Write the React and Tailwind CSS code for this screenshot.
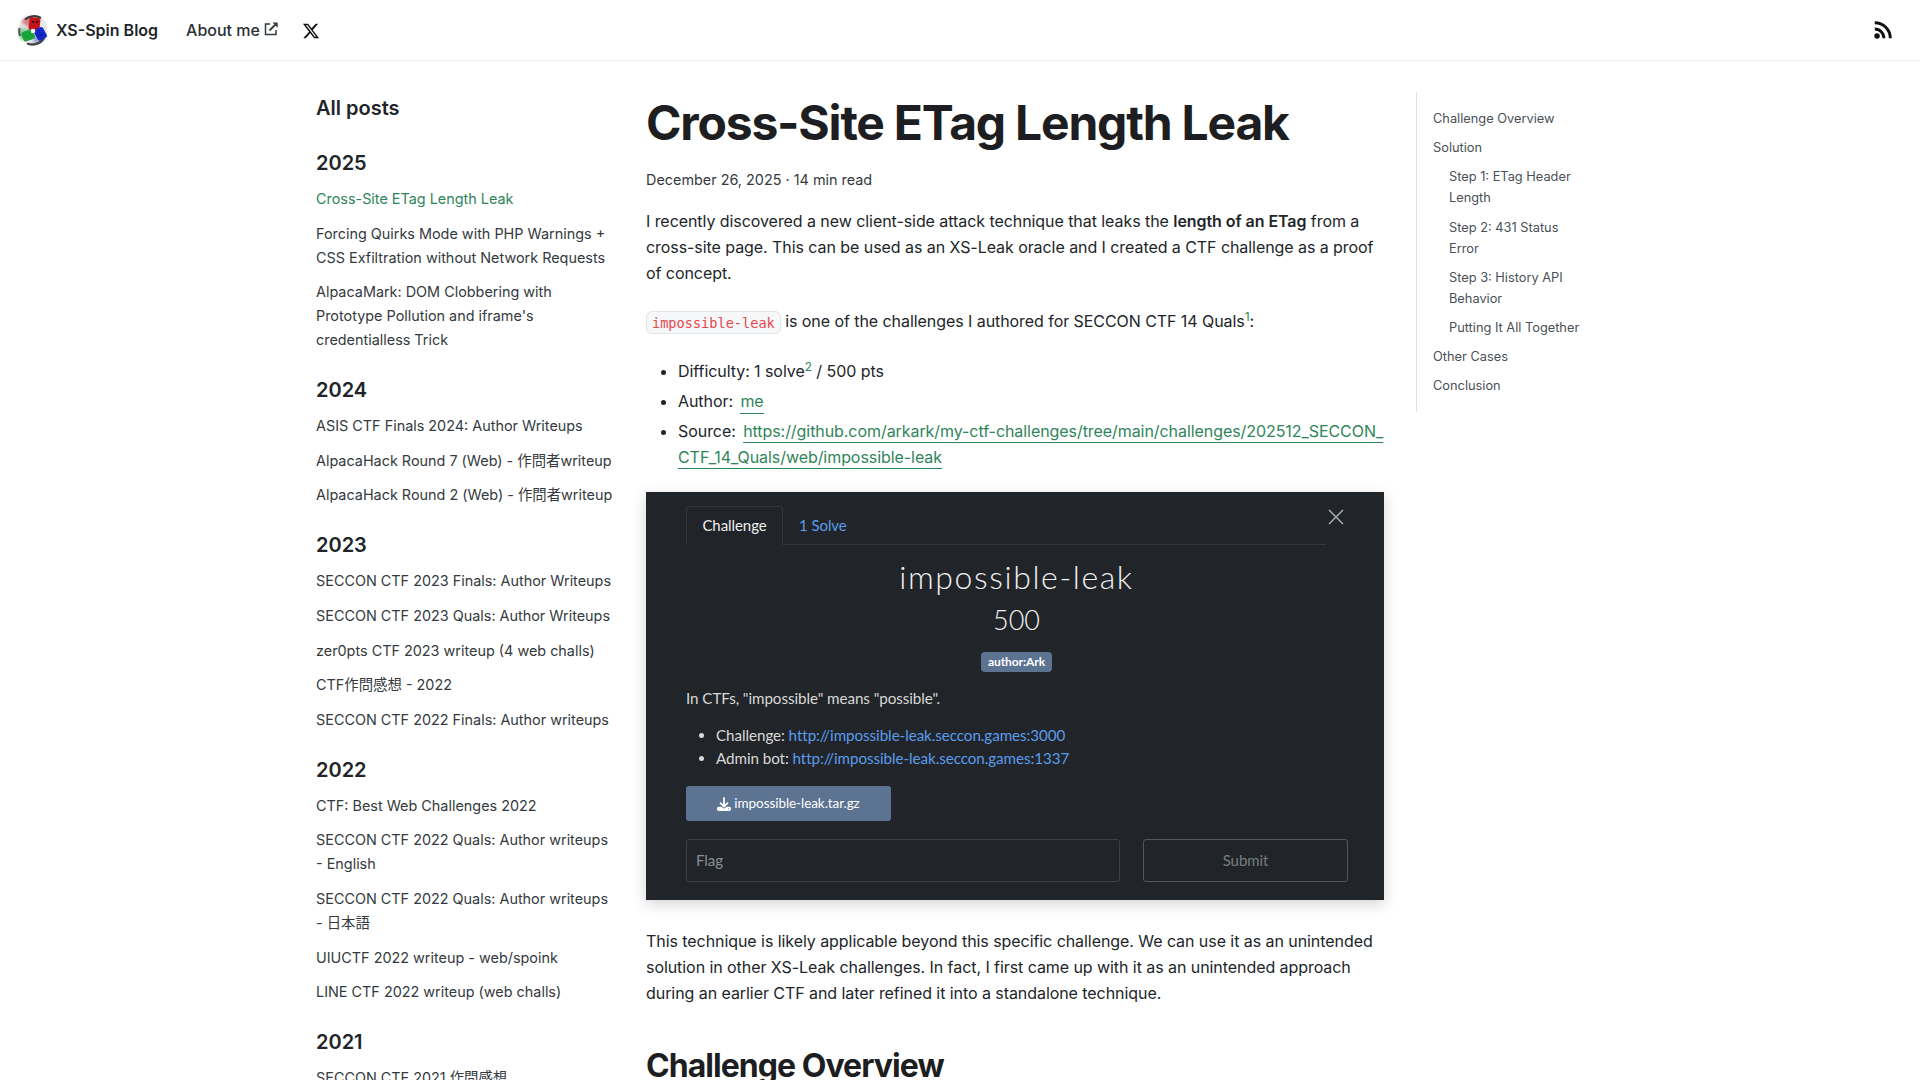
import React from 'react'
import { FaXTwitter, FaDownload } from 'react-icons/fa6'

const years = [
  { year: '2025', posts: ['Cross-Site ETag Length Leak', 'Forcing Quirks Mode with PHP Warnings + CSS Exfiltration without Network Requests', "AlpacaMark: DOM Clobbering with Prototype Pollution and iframe's credentialless Trick"] },
  { year: '2024', posts: ['ASIS CTF Finals 2024: Author Writeups', 'AlpacaHack Round 7 (Web) - 作問者writeup', 'AlpacaHack Round 2 (Web) - 作問者writeup'] },
  { year: '2023', posts: ['SECCON CTF 2023 Finals: Author Writeups', 'SECCON CTF 2023 Quals: Author Writeups', 'zer0pts CTF 2023 writeup (4 web challs)', 'CTF作問感想 - 2022', 'SECCON CTF 2022 Finals: Author writeups'] },
  { year: '2022', posts: ['CTF: Best Web Challenges 2022', 'SECCON CTF 2022 Quals: Author writeups - English', 'SECCON CTF 2022 Quals: Author writeups - 日本語', 'UIUCTF 2022 writeup - web/spoink', 'LINE CTF 2022 writeup (web challs)'] },
  { year: '2021', posts: ['SECCON CTF 2021 作問感想'] },
]

const toc = [
  { label: 'Challenge Overview' },
  { label: 'Solution' },
  { label: 'Step 1: ETag Header Length', sub: true },
  { label: 'Step 2: 431 Status Error', sub: true },
  { label: 'Step 3: History API Behavior', sub: true },
  { label: 'Putting It All Together', sub: true },
  { label: 'Other Cases' },
  { label: 'Conclusion' },
]

const sans = "font-['Inter','Noto_Sans_CJK_JP',sans-serif]"

const Logo = () => (
  <svg width="32" height="32" viewBox="0 0 32 32">
    <defs>
      <filter id="spin" x="-20%" y="-20%" width="140%" height="140%"><feGaussianBlur stdDeviation="1.6" /></filter>
      <filter id="edge" x="-20%" y="-20%" width="140%" height="140%"><feGaussianBlur stdDeviation="0.6" /></filter>
    </defs>
    <circle cx="16" cy="16" r="14.5" fill="#d6d6d6" opacity="0.55" filter="url(#edge)" />
    <path d="M16 16L4 8A14 14 0 0 1 16 2Z" fill="#c22a30" opacity="0.55" filter="url(#spin)" />
    <path d="M16 16L5 27A14 14 0 0 1 2 14Z" fill="#18a038" opacity="0.45" filter="url(#spin)" />
    <path d="M16 16L29 20A14 14 0 0 1 17 30Z" fill="#1c30c0" opacity="0.4" filter="url(#spin)" />
    <path d="M8 5.5A14 14 0 0 1 24 4" fill="none" stroke="#3a3a3a" strokeWidth="2.2" filter="url(#edge)" />
    <path d="M3 22A14 14 0 0 1 2.5 14" fill="none" stroke="#555" strokeWidth="2" filter="url(#edge)" />
    <path d="M10 29.5A14 14 0 0 0 27 24" fill="none" stroke="#444" strokeWidth="2.4" filter="url(#edge)" />
    <rect x="12" y="3.5" width="11" height="13" rx="2.5" fill="#c2121a" transform="rotate(6 17 10)" />
    <rect x="5" y="16.5" width="12" height="10" rx="2.5" fill="#18a436" transform="rotate(-20 11 21)" />
    <rect x="18.5" y="14" width="10" height="12" rx="2.5" fill="#1428c8" transform="rotate(-28 23 20)" />
    <circle cx="16" cy="17" r="2.3" fill="#f6f6f6" />
    <circle cx="16" cy="8" r="1.1" fill="#111" />
    <circle cx="20" cy="8" r="1.1" fill="#111" />
    <circle cx="9.5" cy="22.5" r="1.1" fill="#0a3" />
    <circle cx="24" cy="21" r="1.1" fill="#0a1a80" />
  </svg>
)

const RssIcon = () => (
  <svg width="22" height="22" viewBox="0 0 24 24" fill="none" stroke="#111" strokeWidth="3.2">
    <circle cx="5.5" cy="18.5" r="3" fill="#111" stroke="none" />
    <path d="M3 11a10 10 0 0 1 10 10" />
    <path d="M3 4a17 17 0 0 1 17 17" />
  </svg>
)

const ExternalIcon = () => (
  <svg width="15" height="15" viewBox="0 0 15 15" fill="none" stroke="#343a40" strokeWidth="1.5" className="mb-[3px]">
    <path d="M6 3H1.5v10.5H12V9" />
    <path d="M5.5 9.5L12.5 2.5" strokeWidth="1.8" />
    <path d="M8.5 1.5h5.2v5.2z" fill="#343a40" stroke="none" />
  </svg>
)

const Nav = () => (
  <header className="h-[61px] border-b border-[#e9ecef] flex items-center justify-between pl-[17px] pr-[26px] shrink-0">
    <div className="flex items-center">
      <Logo />
      <span className="ml-[7px] text-[16px] font-semibold text-[#212529]">XS-Spin Blog</span>
      <span className="ml-[28px] text-[16px] font-[450] text-[#2b3035] flex items-center gap-[4px]">
        About me <ExternalIcon />
      </span>
      <FaXTwitter className="ml-[23px] mt-[2px] w-[18px] h-[18px] text-[#111]" />
    </div>
    <RssIcon />
  </header>
)

const Sidebar = () => (
  <aside className="w-[330px] shrink-0 pr-[30px] pt-[33px]">
    <h2 className="text-[20px] leading-[28px] font-semibold text-[#212529] mb-[26px]">All posts</h2>
    <div className="flex flex-col gap-[23px]">
      {years.map((y) => (
        <section key={y.year}>
          <h3 className="text-[20px] leading-[30px] font-semibold text-[#212529]">{y.year}</h3>
          <ul className="mt-[9px] flex flex-col gap-[10.6px]">
            {y.posts.map((p, i) => (
              <li key={p} className={`text-[14.4px] leading-[24px] ${y.year === '2025' && i === 0 ? 'text-[#2f855a]' : 'text-[#343a40]'}`}>{p}</li>
            ))}
          </ul>
        </section>
      ))}
    </div>
  </aside>
)

const ChallengeImage = () => (
  <div className="mt-[22px] w-[738px] h-[408px] bg-[#212529] shadow-[0_4px_14px_rgba(0,0,0,0.18)] relative pl-[40px] pr-[37px] pt-[14px] font-['Lato',sans-serif] text-[#e0e0e0]">
    <span className="absolute right-[38px] top-[15px] text-[#adb5bd]">
      <svg width="20" height="20" viewBox="0 0 20 20" stroke="currentColor" strokeWidth="1.4"><path d="M3 3l14 14M17 3L3 17" /></svg>
    </span>
    <div className="flex w-[640px] border-b border-[#32383e] h-[39px]">
      <div className="w-[97px] h-[39px] border border-b-[#212529] border-[#32383e] rounded-t-[4px] flex items-center justify-center text-[15px] text-[#eeeeee]">Challenge</div>
      <div className="px-[16px] flex items-center text-[15px] text-[#5b9bec]">1 Solve</div>
    </div>
    <h3 className="mt-[14px] text-center text-[32px] leading-[36px] font-light tracking-[0.05em] text-[#f0f0f0]">impossible-leak</h3>
    <p className="mt-[7px] text-center text-[27px] leading-[36px] font-light text-[#f0f0f0]">500</p>
    <div className="mt-[14px] flex justify-center">
      <span className="bg-[#5c7391] text-white text-[12px] font-bold leading-[20px] px-[7px] rounded-[4px]">author:Ark</span>
    </div>
    <p className="mt-[15px] text-[15.2px] leading-[22px] text-[#d8d8d8]">In CTFs, "impossible" means "possible".</p>
    <ul className="mt-[15px] list-disc pl-[30px] text-[15.2px] leading-[23px] text-[#d8d8d8]">
      <li>Challenge: <span className="text-[#5b9bec]">http://impossible-leak.seccon.games:3000</span></li>
      <li>Admin bot: <span className="text-[#5b9bec]">http://impossible-leak.seccon.games:1337</span></li>
    </ul>
    <div className="mt-[16px] w-[205px] h-[35px] bg-[#5c7391] rounded-[3px] flex items-center justify-center gap-[3px] text-[13.5px] text-white">
      <FaDownload className="w-[14px] h-[14px]" /> impossible-leak.tar.gz
    </div>
    <div className="mt-[18px] w-[662px] flex gap-[23px]">
      <div className="w-[434px] h-[43px] border border-[#3c4248] rounded-[3px] flex items-center px-[9px] text-[15px] text-[#8a8f94]">Flag</div>
      <div className="w-[205px] h-[43px] border border-[#50565c] rounded-[3px] flex items-center justify-center text-[15px] text-[#777c81]">Submit</div>
    </div>
  </div>
)

const Article = () => (
  <main className="w-[738px] shrink-0 pt-[32px] text-[#212529] tracking-[-0.004em]">
    <h1 className="text-[48px] leading-[60px] font-bold tracking-[-0.025em] text-[#1c1e21]">Cross-Site ETag Length Leak</h1>
    <p className="mt-[14px] text-[14.4px] leading-[26px] text-[#343a40] tracking-normal">December 26, 2025 · 14 min read</p>
    <p className="mt-[15px] text-[16px] leading-[26px]">
      I recently discovered a new client-side attack technique that leaks the <strong className="font-semibold">length of an ETag</strong> from a cross-site page. This can be used as an XS-Leak oracle and I created a CTF challenge as a proof of concept.
    </p>
    <p className="mt-[22px] text-[16px] leading-[26px]">
      <code className="font-['DejaVu_Sans_Mono',monospace] tracking-normal text-[13.6px] text-[#e5484d] bg-[#f6f7f8] border border-[#e2e5e8] rounded-[6px] px-[5px] py-[2.5px]">impossible-leak</code> is one of the challenges I authored for SECCON CTF 14 Quals<sup className="text-[#2f855a] text-[12px]">1</sup>:
    </p>
    <ul className="mt-[23px] list-disc pl-[32px] text-[16px] leading-[26px] flex flex-col gap-[4px]">
      <li>Difficulty: 1 solve<sup className="text-[#2f855a] text-[12px]">2</sup> / 500 pts</li>
      <li>Author: <span className="ml-[3px] text-[#2f855a] border-b border-[#2f855a] pb-[2px]">me</span></li>
      <li>Source: <span className="ml-[3px] text-[#2f855a] underline underline-offset-[5px] break-all">https://github.com/arkark/my-ctf-challenges/tree/main/challenges/202512_SECCON_CTF_14_Quals/web/impossible-leak</span></li>
    </ul>
    <ChallengeImage />
    <p className="mt-[28px] text-[16px] leading-[26px]">
      This technique is likely applicable beyond this specific challenge. We can use it as an unintended solution in other XS-Leak challenges. In fact, I first came up with it as an unintended approach during an earlier CTF and later refined it into a standalone technique.
    </p>
    <h2 className="mt-[40px] text-[32px] leading-[40px] font-bold tracking-[-0.03em] text-[#1c1e21]">Challenge Overview</h2>
  </main>
)

const Toc = () => (
  <nav className="ml-[32px] mt-[31px] w-[172px] h-[320px] border-l border-[#dee2e6] pl-[16px] pt-[16px] shrink-0">
    <ul className="flex flex-col gap-[8px]">
      {toc.map((t) => (
        <li key={t.label} className={`text-[12.8px] leading-[21.12px] text-[#495057] ${t.sub ? 'pl-[16px]' : ''}`}>{t.label}</li>
      ))}
    </ul>
  </nav>
)

export default function App() {
  return (
    <div className={`h-screen overflow-hidden bg-white flex flex-col ${sans}`}>
      <Nav />
      <div className="w-[1288px] mx-auto flex">
        <Sidebar />
        <Article />
        <Toc />
      </div>
    </div>
  )
}
